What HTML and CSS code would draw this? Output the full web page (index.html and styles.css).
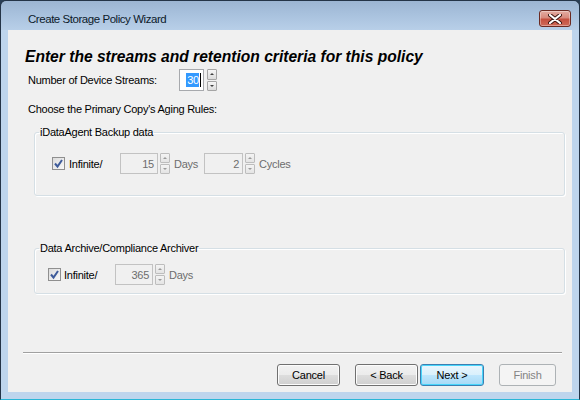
FILE: index.html
```html
<!DOCTYPE html>
<html>
<head>
<meta charset="utf-8">
<link rel="stylesheet" href="styles.css">
</head>
<body>
<div class="window">
  <div class="titlebar">
    <span class="title">Create Storage Policy Wizard</span>
    <button class="close" aria-label="Close">
      <svg width="14" height="10" viewBox="0 0 14 10"><path d="M2 1 L12 9 M12 1 L2 9" stroke="#3a1410" stroke-width="4" stroke-linecap="round"/><path d="M2 1 L12 9 M12 1 L2 9" stroke="#fff" stroke-width="2.2" stroke-linecap="round"/></svg>
    </button>
  </div>
  <div class="client">
    <h1 class="heading">Enter the streams and retention criteria for this policy</h1>
    <div class="streams">
      <span class="streams-label">Number of Device Streams:</span>
      <span class="textbox active"><span class="sel">30</span><span class="caret"></span></span>
      <span class="spin"><span class="up"></span><span class="down"></span></span>
    </div>
    <div class="choose">Choose the Primary Copy's Aging Rules:</div>

    <fieldset class="group g1">
      <legend>iDataAgent Backup data</legend>
      <div class="row">
        <span class="check"><svg width="11" height="11" viewBox="0 0 11 11"><path d="M2 5.5 L4.5 8.5 L9 2" fill="none" stroke="#3e5b9a" stroke-width="2"/></svg></span>
        <span class="clabel">Infinite/</span>
        <span class="textbox dis w38 ml13">15</span>
        <span class="spin dspin"><span class="up"></span><span class="down"></span></span>
        <span class="unit days">Days</span>
        <span class="textbox dis w39 ml5">2</span>
        <span class="spin dspin"><span class="up"></span><span class="down"></span></span>
        <span class="unit">Cycles</span>
      </div>
    </fieldset>

    <fieldset class="group g2">
      <legend>Data Archive/Compliance Archiver</legend>
      <div class="row">
        <span class="check"><svg width="11" height="11" viewBox="0 0 11 11"><path d="M2 5.5 L4.5 8.5 L9 2" fill="none" stroke="#3e5b9a" stroke-width="2"/></svg></span>
        <span class="clabel c2">Infinite/</span>
        <span class="textbox dis w38 ml12">365</span>
        <span class="spin dspin"><span class="up"></span><span class="down"></span></span>
        <span class="unit">Days</span>
      </div>
    </fieldset>

    <div class="separator"></div>
    <div class="buttons">
      <button class="btn w63">Cancel</button>
      <button class="btn w63 ml15">&lt; Back</button>
      <button class="btn w64 default ml2">Next &gt;</button>
      <button class="btn w57 disabled ml15">Finish</button>
    </div>
  </div>
</div>
</body>
</html>
```

FILE: styles.css
```css
html, body {
  margin: 0;
  padding: 0;
  background: #2a3f56;
}
body {
  width: 580px;
  height: 400px;
  overflow: hidden;
  font-family: "Liberation Sans", Arial, sans-serif;
  font-size: 11px;
  letter-spacing: -0.25px;
  color: #000;
}
.window {
  box-sizing: border-box;
  width: 580px;
  height: 400px;
  border: 1px solid #243447;
  border-bottom-color: #2bb6d6;
  border-radius: 6px 6px 0 0;
  background: linear-gradient(to bottom, #9cb5d2 0px, #a9c2de 14px, #b8cfe8 29px, #bed5ed 29px, #bed5ed 100%);
  display: flex;
  flex-direction: column;
}
.titlebar {
  height: 29px;
  display: flex;
  align-items: flex-start;
  position: relative;
}
.title {
  font-family: "Liberation Sans", Arial, sans-serif;
  font-size: 11.5px;
  letter-spacing: -0.45px;
  line-height: 14px;
  color: #0c1a2a;
  margin-left: 27px;
  margin-top: 11px;
}
.close {
  position: absolute;
  right: 8px;
  top: 9px;
  width: 32px;
  height: 17px;
  padding: 0;
  border: 1px solid #6b2a22;
  border-radius: 3px;
  background: linear-gradient(to bottom, #e3aca2 0%, #d88a7d 45%, #c5503f 55%, #cf6a58 100%);
  box-shadow: inset 0 0 0 1px rgba(255,255,255,0.35);
  display: flex;
  align-items: center;
  justify-content: center;
}
.client {
  margin: 0 7px 7px 7px;
  flex: 1;
  background: #f0f0f0;
  position: relative;
}
.heading {
  margin: 0;
  padding: 17px 0 0 17px;
  font-size: 15.6px;
  line-height: 20px;
  letter-spacing: 0;
  font-weight: bold;
  font-style: italic;
  font-family: "Liberation Sans", Arial, sans-serif;
  color: #000;
}
.streams {
  margin-top: 2px;
  height: 22px;
  display: flex;
  align-items: center;
  padding-left: 20px;
}
.streams-label {
  width: 151px;
}
.textbox {
  box-sizing: border-box;
  height: 22px;
  border: 1px solid #abadb3;
  background: #fff;
  display: inline-flex;
  align-items: center;
  justify-content: flex-end;
  padding-right: 3px;
}
.textbox.active {
  width: 25px;
  border-color: #a7a9ad;
  padding-right: 2px;
}
.sel {
  background: #3399ff;
  color: #fff;
  line-height: 14px;
  padding: 0 0 0 1px;
}
.caret {
  width: 1px;
  height: 14px;
  background: #000;
  margin-left: 1px;
}
.spin {
  display: inline-flex;
  flex-direction: column;
  width: 10px;
  height: 22px;
  margin-left: 3px;
  gap: 1px;
}
.spin .up, .spin .down {
  flex: 1;
  box-sizing: border-box;
  border: 1px solid #a5a5a5;
  border-radius: 1px;
  background: linear-gradient(to bottom, #f6f6f6, #dcdcdc);
  position: relative;
}
.spin .up::after, .spin .down::after {
  content: "";
  position: absolute;
  left: 2px;
  top: 3px;
  border-left: 2px solid transparent;
  border-right: 2px solid transparent;
}
.spin .up::after { border-bottom: 2px solid #404040; }
.spin .down::after { border-top: 2px solid #404040; }
.dspin .up, .dspin .down {
  border-color: #bdbdbd;
  background: linear-gradient(to bottom, #f4f4f4, #e4e4e4);
}
.dspin .up::after { border-bottom-color: #9a9a9a; }
.dspin .down::after { border-top-color: #9a9a9a; }
.choose {
  margin-top: 12px;
  padding-left: 20px;
  line-height: 13px;
}
.group {
  margin: 0 7px 0 26px;
  border: 1px solid #d5dfe5;
  border-radius: 3px;
  box-shadow: inset 1px 1px 0 #fff, 1px 1px 0 #fff;
  min-width: 0;
}
.group legend {
  padding: 0 1px;
  line-height: 13px;
}
.g1 {
  margin-top: 10px;
  padding: 14px 0 21px 17px;
}
.g1 legend { margin-left: -13px; }
.g2 {
  margin-top: 46px;
  padding: 9px 0 8px 13px;
}
.g2 legend { margin-left: -9px; }
.row {
  display: flex;
  align-items: center;
  height: 21px;
}
.check {
  box-sizing: border-box;
  width: 13px;
  height: 13px;
  border: 1px solid #8f8f8f;
  background: linear-gradient(135deg, #dcdcdc, #f8f8f8);
  display: inline-flex;
  align-items: center;
  justify-content: center;
}
.clabel { margin-left: 4px; width: 38px; }
.clabel.c2 { margin-left: 3px; width: 39px; }
.textbox.dis {
  height: 21px;
  border-color: #c2c2c2;
  background: #f0f0f0;
  color: #6d6d6d;
}
.w38 { width: 38px; }
.w39 { width: 39px; }
.ml13 { margin-left: 13px; }
.ml12 { margin-left: 12px; }
.ml5 { margin-left: 5px; }
.dspin { height: 21px; margin-left: 2px; }
.unit {
  color: #6d6d6d;
  margin-left: 4px;
}
.unit.days { width: 25px; }
.separator {
  margin: 58px 10px 0 15px;
  height: 1px;
  background: #a0a0a0;
  border-bottom: 1px solid #fff;
}
.buttons {
  display: flex;
  margin-top: 10px;
  padding-left: 269px;
}
.btn {
  box-sizing: border-box;
  height: 22px;
  padding: 0;
  font-family: "Liberation Sans", Arial, sans-serif;
  font-size: 11px;
  letter-spacing: -0.2px;
  color: #000;
  border: 1px solid #707070;
  border-radius: 3px;
  background: linear-gradient(to bottom, #f2f2f2 0%, #ebebeb 50%, #dddddd 50%, #cfcfcf 100%);
  box-shadow: inset 0 0 0 1px #fcfcfc;
}
.w63 { width: 63px; }
.w64 { width: 64px; }
.w57 { width: 57px; }
.ml15 { margin-left: 15px; }
.ml2 { margin-left: 2px; }
.btn.default {
  border-color: #3c7fb1;
  background: linear-gradient(to bottom, #eaf6fd 0%, #d9f0fc 50%, #bee6fd 50%, #a7d9f5 100%);
  box-shadow: inset 0 0 0 1px #48d5fb;
}
.btn.disabled {
  border-color: #adb2b5;
  background: #f4f4f4;
  color: #838383;
  box-shadow: none;
}
```
